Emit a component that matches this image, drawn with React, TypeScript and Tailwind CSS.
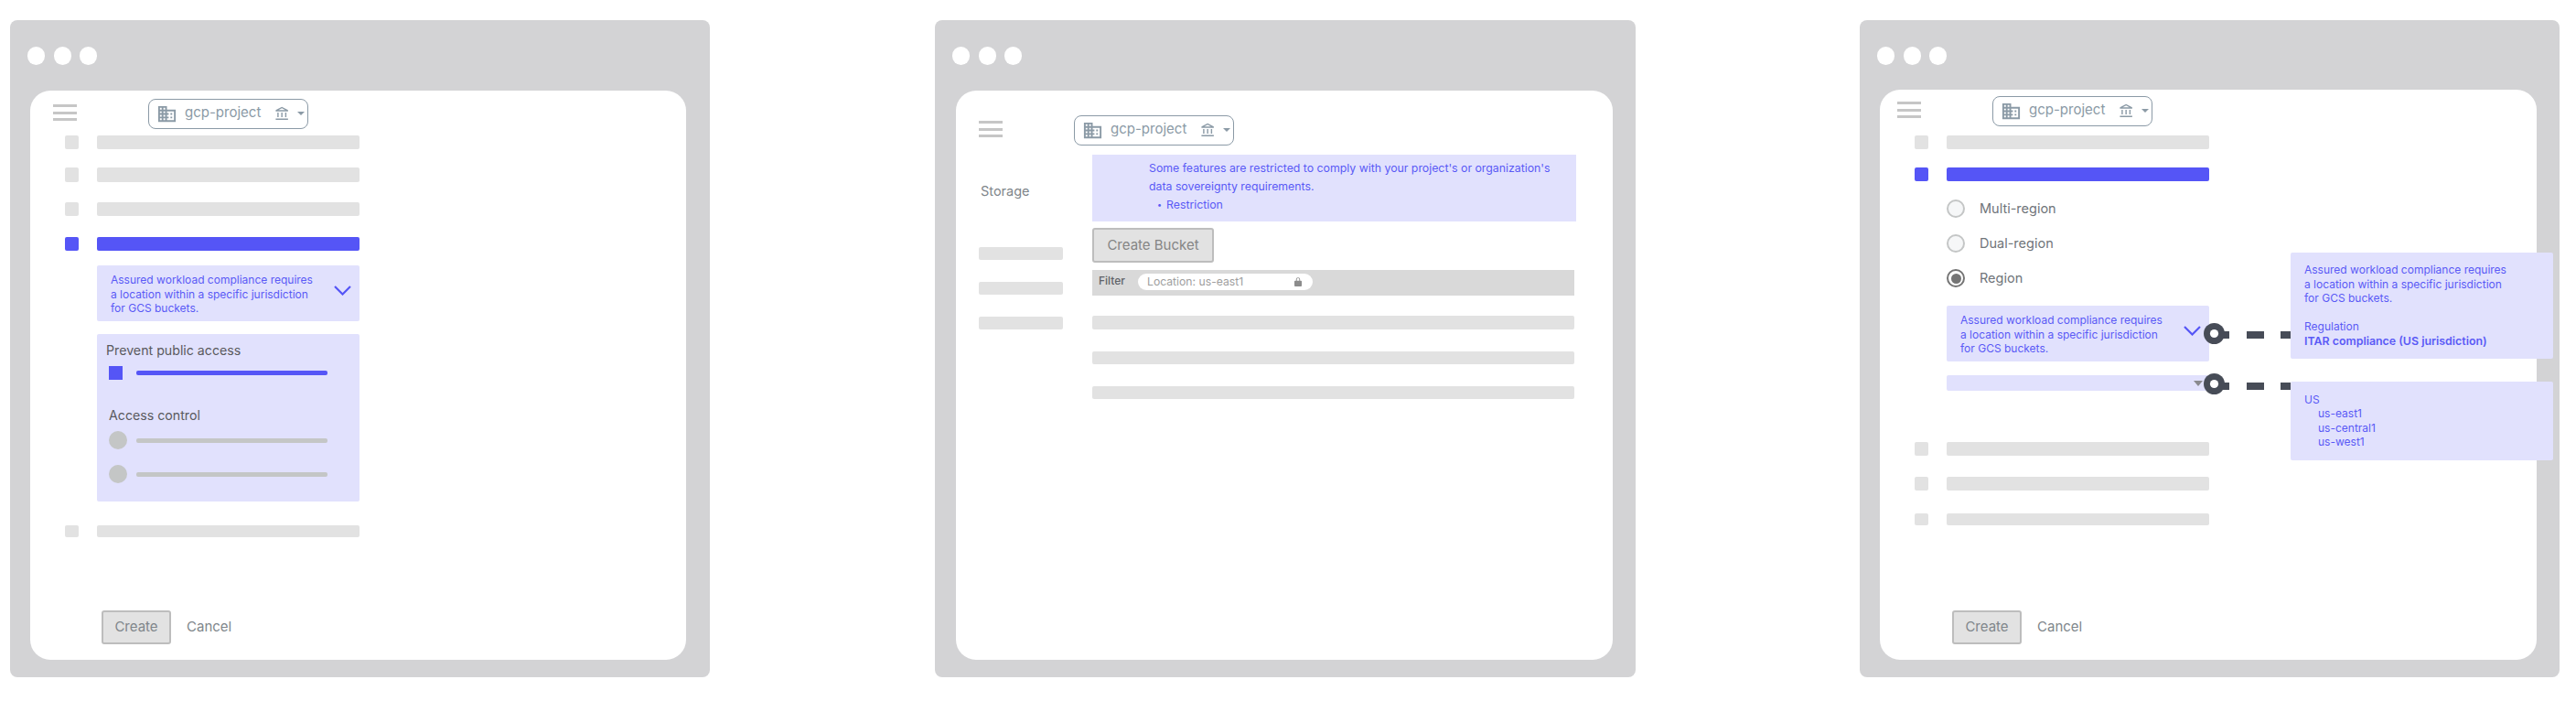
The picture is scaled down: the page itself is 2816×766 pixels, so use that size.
import React from "react";

const font = { fontFamily: "Inter, 'Liberation Sans', sans-serif" };

function Dots() {
  return (
    <div className="flex gap-[9.5px] pl-[19px] pt-[29px] h-[77px] shrink-0">
      <div className="w-[19px] h-[20px] rounded-full bg-white" />
      <div className="w-[19px] h-[20px] rounded-full bg-white" />
      <div className="w-[19px] h-[20px] rounded-full bg-white" />
    </div>
  );
}

function Header({ className }: { className: string }) {
  return (
    <div className={"flex shrink-0 " + className}>
      <div className="flex flex-col gap-[4.5px] w-[26px] mt-[6px]">
        <div className="h-[3px] bg-[#c6c6c6]" />
        <div className="h-[3px] bg-[#c6c6c6]" />
        <div className="h-[3px] bg-[#c6c6c6]" />
      </div>
      <div className="ml-[78px] w-[175px] h-[33px] rounded-[8px] border border-[#8b9aa6] flex items-center pl-[8px] text-[#8b9aa6]">
        <svg width="23" height="23" viewBox="0 0 24 24" fill="currentColor">
          <path d="M12 7V3H2v18h20V7H12zM6 19H4v-2h2v2zm0-4H4v-2h2v2zm0-4H4V9h2v2zm0-4H4V5h2v2zm4 12H8v-2h2v2zm0-4H8v-2h2v2zm0-4H8V9h2v2zm0-4H8V5h2v2zm10 12h-8v-2h2v-2h-2v-2h2v-2h-2V9h8v10zm-2-8h-2v2h2v-2zm0 4h-2v2h2v-2z" />
        </svg>
        <span className="ml-[8px] text-[15px] leading-[20px] w-[88px] -mt-[3px]">gcp-project</span>
        <svg className="ml-[10px]" width="17" height="17" viewBox="0 0 24 24" fill="currentColor">
          <path d="M6.5 10h-2v7h2v-7zm6 0h-2v7h2v-7zm8.5 9H2v2h19v-2zm-2.5-9h-2v7h2v-7zm-7-6.74L16.71 6H6.29l5.21-2.74m0-2.26L2 6v2h19V6l-9.5-5z" />
        </svg>
        <svg className="ml-[8px] -mt-[1px]" width="8" height="4" viewBox="0 0 8 4" fill="currentColor">
          <path d="M0 0h8L4 4z" />
        </svg>
      </div>
    </div>
  );
}

function Row({ className, blue }: { className: string; blue?: boolean }) {
  const color = blue ? "bg-[#5555f6]" : "bg-[#e2e2e2]";
  return (
    <div className={"flex gap-[20px] shrink-0 " + className}>
      <div className={"w-[15px] rounded-[2px] " + color} />
      <div className={"w-[287px] rounded-[2px] " + color} />
    </div>
  );
}

function Chevron({ className }: { className?: string }) {
  return (
    <svg className={className} width="19" height="11" viewBox="0 0 19 11" fill="none" stroke="#5555f6" strokeWidth="2.2">
      <path d="M1 1l8.5 8.5L18 1" />
    </svg>
  );
}

function Compliance({ className }: { className: string }) {
  return (
    <div className={"w-[287px] h-[61px] rounded-[2px] bg-[#e1e1fd] flex items-center justify-between pl-[15px] pr-[9px] shrink-0 " + className}>
      <div className="pt-[2px] text-[12px] leading-[15.5px] text-[#5a5af6] whitespace-nowrap">
        Assured workload compliance requires
        <br />
        a location within a specific jurisdiction
        <br />
        for GCS buckets.
      </div>
      <Chevron className="-mt-[7px]" />
    </div>
  );
}

function Actions({ className }: { className: string }) {
  return (
    <div className={"mt-auto mb-[17px] flex items-center " + className}>
      <div className="w-[76px] h-[37px] rounded-[3px] border-2 border-[#bdbdbd] bg-[#e2e2e2] flex items-center justify-center text-[15px] text-[#80868b]">
        Create
      </div>
      <span className="ml-[17px] text-[15px] text-[#80868b]">Cancel</span>
    </div>
  );
}

function Option({ label, selected, className }: { label: string; selected?: boolean; className: string }) {
  return (
    <div className={"flex items-center h-[20px] ml-[73px] shrink-0 " + className}>
      {selected ? (
        <div className="w-[20px] h-[20px] rounded-full border-2 border-[#757575] bg-white flex items-center justify-center">
          <div className="w-[11px] h-[11px] rounded-full bg-[#757575]" />
        </div>
      ) : (
        <div className="w-[20px] h-[20px] rounded-full border-2 border-[#c4c6c6] bg-[#f6f7f8]" />
      )}
      <span className="ml-[16px] text-[14.5px] text-[#70757a]">{label}</span>
    </div>
  );
}

function Connector({ className, barY }: { className: string; barY: number }) {
  return (
    <svg className={"absolute " + className} width="95" height="24" viewBox="0 0 95 24">
      <rect x="20" y={barY} width="8" height="8" fill="#474c57" />
      <rect x="47" y={barY} width="19" height="8" fill="#474c57" />
      <rect x="84" y={barY} width="11" height="8" fill="#474c57" />
      <circle cx="11.5" cy="11.5" r="11.5" fill="#474c57" />
      <circle cx="11.5" cy="11.5" r="4.6" fill="#ffffff" />
    </svg>
  );
}

function WindowOne() {
  return (
    <div className="ml-[11px] w-[765px] h-[718px] rounded-[8px] bg-[#d3d3d5] flex flex-col shrink-0">
      <Dots />
      <div className="mx-[22px] w-[717px] h-[622px] rounded-[22px] bg-white flex flex-col">
        <Header className="pl-[25px] pt-[9px]" />
        <Row className="ml-[38px] mt-[7px] h-[15px]" />
        <Row className="ml-[38px] mt-[20px] h-[16px]" />
        <Row className="ml-[38px] mt-[22px] h-[15px]" />
        <Row blue className="ml-[38px] mt-[23px] h-[15px]" />
        <Compliance className="ml-[73px] mt-[16px]" />
        <div className="ml-[73px] mt-[14px] w-[287px] h-[183px] rounded-[2px] bg-[#e1e1fd] pl-[13px] pt-[8px] shrink-0">
          <div className="-ml-[3px] text-[14.2px] leading-[20px] text-[#5a5a5e]">Prevent public access</div>
          <div className="flex items-center mt-[7px] h-[15px]">
            <div className="w-[15px] h-[15px] bg-[#5555f6]" />
            <div className="ml-[15px] w-[209px] h-[5px] rounded-[2px] bg-[#5555f6]" />
          </div>
          <div className="mt-[29px] text-[14.2px] leading-[20px] text-[#5a5a5e]">Access control</div>
          <div className="flex items-center mt-[7px]">
            <div className="w-[20px] h-[20px] rounded-full bg-[#c4c6c6]" />
            <div className="ml-[10px] w-[209px] h-[5px] rounded-[2px] bg-[#c4c6c6]" />
          </div>
          <div className="flex items-center mt-[17px]">
            <div className="w-[20px] h-[20px] rounded-full bg-[#c4c6c6]" />
            <div className="ml-[10px] w-[209px] h-[5px] rounded-[2px] bg-[#c4c6c6]" />
          </div>
        </div>
        <Row className="ml-[38px] mt-[26px] h-[13px]" />
        <Actions className="ml-[78px]" />
      </div>
    </div>
  );
}

function WindowTwo() {
  return (
    <div className="ml-[246px] w-[766px] h-[718px] rounded-[8px] bg-[#d3d3d5] flex flex-col shrink-0">
      <Dots />
      <div className="mx-[23px] w-[718px] h-[622px] rounded-[22px] bg-white flex flex-col">
        <Header className="pl-[25px] pt-[27px]" />
        <div className="flex mt-[10px]">
          <div className="ml-[25px] w-[92px] flex flex-col">
            <div className="pt-[30px] pl-[2px] text-[14.5px] leading-[20px] text-[#80868b]">Storage</div>
            <div className="mt-[51px] h-[14px] rounded-[2px] bg-[#e2e2e2]" />
            <div className="mt-[24px] h-[14px] rounded-[2px] bg-[#e2e2e2]" />
            <div className="mt-[24px] h-[14px] rounded-[2px] bg-[#e2e2e2]" />
          </div>
          <div className="ml-[32px] w-[529px] flex flex-col">
            <div className="h-[73px] bg-[#e1e1fd] pl-[62px] pt-[5px] text-[12.3px] leading-[20px] text-[#5a5af6]">
              <div className="whitespace-nowrap">Some features are restricted to comply with your project's or organization's</div>
              <div>data sovereignty requirements.</div>
              <div className="flex items-center">
                <span className="ml-[9px] w-[10px] text-[9px]">•</span>
                <span>Restriction</span>
              </div>
            </div>
            <div className="mt-[7px] w-[133px] h-[38px] rounded-[3px] border-2 border-[#bdbdbd] bg-[#e2e2e2] flex items-center justify-center text-[15px] text-[#858585]">
              Create Bucket
            </div>
            <div className="mt-[8px] w-[527px] h-[28px] bg-[#d9d9d9] flex items-center pl-[7px]">
              <span className="w-[43px] -mt-[4px] text-[12px] font-medium text-[#5f6368]">Filter</span>
              <div className="-mt-[2px] w-[191px] h-[18px] rounded-full bg-white flex items-center pl-[10px] text-[12.2px] text-[#9e9e9e]">
                <span className="w-[161px]">Location: us-east1</span>
                <svg width="8" height="10" viewBox="0 0 9 11" fill="#8c8c8c">
                  <path d="M1 4h1V2.6a2.5 2.5 0 0 1 5 0V4h1a1 1 0 0 1 1 1v5a1 1 0 0 1-1 1H1a1 1 0 0 1-1-1V5a1 1 0 0 1 1-1zm2 0h3V2.6a1.5 1.5 0 0 0-3 0z" />
                </svg>
              </div>
            </div>
            <div className="mt-[22px] w-[527px] h-[15px] rounded-[2px] bg-[#e2e2e2]" />
            <div className="mt-[24px] w-[527px] h-[14px] rounded-[2px] bg-[#e2e2e2]" />
            <div className="mt-[24px] w-[527px] h-[14px] rounded-[2px] bg-[#e2e2e2]" />
          </div>
        </div>
      </div>
    </div>
  );
}

function WindowThree() {
  return (
    <div className="ml-[245px] w-[765px] h-[718px] rounded-[8px] bg-[#d3d3d5] flex flex-col shrink-0">
      <Dots />
      <div className="relative mx-[22px] w-[718px] h-[623px] -mt-[1px] rounded-[22px] bg-white flex flex-col">
        <Header className="pl-[19px] pt-[7px]" />
        <Row className="ml-[38px] mt-[10px] h-[15px]" />
        <Row blue className="ml-[38px] mt-[20px] h-[15px]" />
        <Option label="Multi-region" className="mt-[20px]" />
        <Option label="Dual-region" className="mt-[18px]" />
        <Option label="Region" selected className="mt-[18px]" />
        <Compliance className="ml-[73px] mt-[20px]" />
        <div className="ml-[73px] mt-[15px] w-[287px] h-[17px] rounded-[2px] bg-[#e1e1fd] flex justify-end items-center pr-[7px] shrink-0">
          <svg width="10" height="6" viewBox="0 0 10 6" fill="#8a8a8f">
            <path d="M0 0h10L5 6z" />
          </svg>
        </div>
        <Row className="ml-[38px] mt-[56px] h-[15px]" />
        <Row className="ml-[38px] mt-[23px] h-[15px]" />
        <Row className="ml-[38px] mt-[25px] h-[13px]" />
        <Actions className="ml-[79px]" />

        <Connector className="left-[354px] top-[255px]" barY={9} />
        <Connector className="left-[354px] top-[310px]" barY={10} />
        <div className="absolute left-[449px] top-[178px] w-[287px] h-[116px] rounded-[2px] bg-[#e1e1fd] pl-[15px] pt-[11px] text-[12px] leading-[15.5px] text-[#5a5af6] whitespace-nowrap">
          Assured workload compliance requires
          <br />
          a location within a specific jurisdiction
          <br />
          for GCS buckets.
          <br />
          <br />
          Regulation
          <br />
          <span className="text-[12.4px] font-semibold">ITAR compliance (US jurisdiction)</span>
        </div>
        <div className="absolute left-[449px] top-[319px] w-[287px] h-[86px] rounded-[2px] bg-[#e1e1fd] pl-[15px] pt-[11.5px] text-[12px] leading-[15.5px] text-[#5a5af6]">
          <div>US</div>
          <div className="pl-[15px]">us-east1</div>
          <div className="pl-[15px]">us-central1</div>
          <div className="pl-[15px]">us-west1</div>
        </div>
      </div>
    </div>
  );
}

export default function App() {
  return (
    <div className="w-[2816px] h-[766px] bg-white pt-[22px] flex overflow-hidden" style={font}>
      <WindowOne />
      <WindowTwo />
      <WindowThree />
    </div>
  );
}
